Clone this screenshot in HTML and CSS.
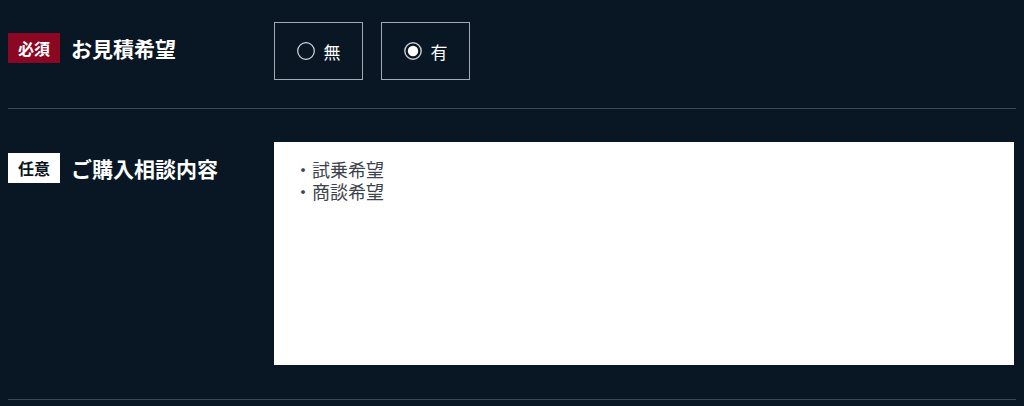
FILE: index.html
```html
<!DOCTYPE html>
<html lang="ja">
<head>
<meta charset="utf-8">
<link rel="stylesheet" href="styles.css">
</head>
<body>
<div class="form">
  <div class="row row-first">
    <div class="label-col">
      <span class="badge badge-req">必須</span>
      <span class="label">お見積希望</span>
    </div>
    <div class="field">
      <div class="radios">
        <label class="radio-box">
          <svg class="radio" width="18" height="18" viewBox="0 0 18 18"><circle cx="9" cy="9" r="8.3" fill="none" stroke="#d6dade" stroke-width="1.2"/></svg>
          <span>無</span>
        </label>
        <label class="radio-box">
          <svg class="radio" width="18" height="18" viewBox="0 0 18 18"><circle cx="9" cy="9" r="8.2" fill="none" stroke="#c8cdd2" stroke-width="1.4"/><circle cx="9" cy="9" r="5.2" fill="#ffffff"/></svg>
          <span>有</span>
        </label>
      </div>
    </div>
  </div>
  <div class="row row-second">
    <div class="label-col">
      <span class="badge badge-opt">任意</span>
      <span class="label">ご購入相談内容</span>
    </div>
    <div class="field">
      <div class="textarea">
        <div class="line">・試乗希望</div>
        <div class="line">・商談希望</div>
      </div>
    </div>
  </div>
</div>
</body>
</html>
```

FILE: styles.css
```css
html, body {
  background: #081723;
}
body {
  margin: 8px;
  font-family: "Noto Sans CJK JP", "Noto Sans", sans-serif;
  color: #ffffff;
}
.row {
  display: flex;
  border-bottom: 1px solid #3a4651;
}
.row-first {
  padding: 14px 0 28px;
}
.row-second {
  padding: 33px 0 34px;
}
.label-col {
  width: 266px;
  flex: none;
  display: flex;
  align-items: flex-start;
  padding-top: 11px;
}
.badge {
  width: 52px;
  height: 30px;
  display: flex;
  align-items: center;
  justify-content: center;
  font-size: 16px;
  font-weight: 700;
  line-height: 1;
}
.badge-req {
  background: #8c0822;
  color: #ffffff;
}
.badge-opt {
  background: #ffffff;
  color: #0b1621;
}
.label {
  margin-left: 11px;
  font-size: 21px;
  font-weight: 700;
  line-height: 30px;
  color: #ffffff;
}
.field {
  flex: 1;
  margin-right: 2px;
}
.radios {
  display: flex;
  gap: 18px;
}
.radio-box {
  width: 89px;
  height: 58px;
  box-sizing: border-box;
  border: 1px solid #a3aab1;
  display: flex;
  align-items: center;
  justify-content: center;
  gap: 9px;
  font-size: 17px;
  color: #ffffff;
}
.radio {
  display: block;
}
.textarea {
  height: 223px;
  box-sizing: border-box;
  background: #ffffff;
  color: #3d434b;
  font-size: 18px;
  padding: 16px 20px;
}
.line {
  height: 22px;
  line-height: 22px;
}
```
